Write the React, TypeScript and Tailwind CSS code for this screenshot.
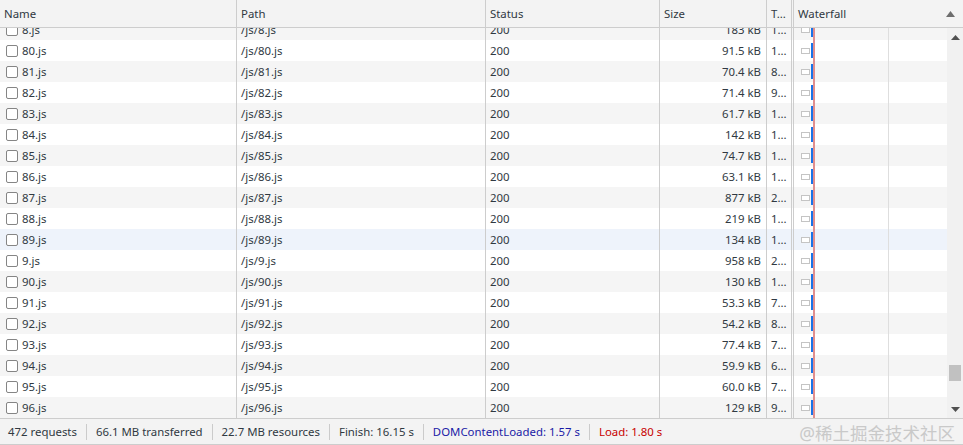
import React from "react";

const rows: [string, string, string][] = [
  ["8", "183 kB", "1..."],
  ["80", "91.5 kB", "1..."],
  ["81", "70.4 kB", "8..."],
  ["82", "71.4 kB", "9..."],
  ["83", "61.7 kB", "1..."],
  ["84", "142 kB", "1..."],
  ["85", "74.7 kB", "1..."],
  ["86", "63.1 kB", "1..."],
  ["87", "877 kB", "2..."],
  ["88", "219 kB", "1..."],
  ["89", "134 kB", "1..."],
  ["9", "958 kB", "2..."],
  ["90", "130 kB", "1..."],
  ["91", "53.3 kB", "7..."],
  ["92", "54.2 kB", "8..."],
  ["93", "77.4 kB", "7..."],
  ["94", "59.9 kB", "6..."],
  ["95", "60.0 kB", "7..."],
  ["96", "129 kB", "9..."],
];

const cols = "grid grid-cols-[237px_249px_174px_107px_25px_155px]";

function Sep() {
  return <div className="mx-[9px] h-[16px] w-px bg-[#cbcbcb]" />;
}

export default function App() {
  return (
    <div
      className="relative w-[963px] h-[445px] overflow-hidden bg-white text-[11.4px] text-[#303942]"
      style={{ fontFamily: '"Noto Sans", "Open Sans", sans-serif' }}
    >
      {/* header */}
      <div className="flex h-[28px] bg-[#f3f3f3] border-b border-[#cdcdcd]">
        <div className={cols + " h-full"}>
          <div className="flex items-center px-[4px] border-r border-[#cdcdcd]">Name</div>
          <div className="flex items-center px-[4px] border-r border-[#cdcdcd]">Path</div>
          <div className="flex items-center px-[4px] border-r border-[#cdcdcd]">Status</div>
          <div className="flex items-center px-[4px] border-r border-[#cdcdcd]">Size</div>
          <div className="flex items-center px-[4px] border-r border-[#cdcdcd] overflow-hidden whitespace-nowrap">T...</div>
          <div className="flex items-center px-[4px] border-l border-[#cdcdcd] ml-[1px]">Waterfall</div>
        </div>
        <div className="flex-1 flex items-center justify-center">
          <svg width="9" height="6" viewBox="0 0 9 6" className="-ml-[10px]">
            <path d="M0 6 L4.5 0 L9 6 Z" fill="#6e6e6e" />
          </svg>
        </div>
      </div>

      {/* body */}
      <div className="flex h-[390px]">
        <div className="relative w-[947px] overflow-hidden">
          <div className="-mt-[9px]">
            {rows.map(([n, size, time], i) => {
              const bg = n === "89" ? "bg-[#eef3fb]" : i % 2 === 0 ? "bg-[#f5f5f5]" : "bg-white";
              return (
                <div key={n} className={cols + " h-[21px] " + bg}>
                  <div className="flex items-center gap-[4px] pl-[6px] border-r border-[#cdcdcd]">
                    <span className="w-[12px] h-[12px] border border-[#858585] rounded-[2px] bg-white" />
                    <span>{n}.js</span>
                  </div>
                  <div className="flex items-center px-[4px] border-r border-[#cdcdcd]">/js/{n}.js</div>
                  <div className="flex items-center px-[4px] border-r border-[#cdcdcd]">200</div>
                  <div className="flex items-center justify-end pr-[5px] border-r border-[#cdcdcd]">{size}</div>
                  <div className="flex items-center pl-[4px] border-r border-[#cdcdcd] overflow-hidden whitespace-nowrap">{time}</div>
                  <div className="relative flex items-center ml-[1px] border-l border-[#cdcdcd]">
                    <span className="ml-[7px] w-[9px] h-[6px] border border-[#c4c4c4] bg-white" />
                    <span className="ml-[1px] w-[3px] h-[15px] bg-[#1a73e8]" />
                  </div>
                </div>
              );
            })}
          </div>
          {/* waterfall overlays */}
          <div className="absolute top-0 bottom-0 left-[813px] w-[2px] bg-[#e08e8e]" />
          <div className="absolute top-0 bottom-0 left-[888px] w-px bg-[#dedede]" />
        </div>
        {/* scrollbar */}
        <div className="relative flex-1 bg-[#f1f1f1] flex flex-col items-center">
          <svg width="9" height="5" viewBox="0 0 9 5" className="mt-[7px]">
            <path d="M0 5 L4.5 0 L9 5 Z" fill="#505050" />
          </svg>
          <div className="flex-1" />
          <div className="w-[12px] h-[16px] bg-[#c1c1c1] mb-[26px]" />
          <svg width="9" height="5" viewBox="0 0 9 5" className="mb-[6px]">
            <path d="M0 0 L4.5 5 L9 0 Z" fill="#505050" />
          </svg>
        </div>
      </div>

      {/* status bar */}
      <div className="relative flex items-center h-[27px] bg-[#f3f3f3] border-t border-[#cdcdcd] border-b px-[8px] whitespace-nowrap">
        <span>472 requests</span>
        <Sep />
        <span>66.1 MB transferred</span>
        <Sep />
        <span>22.7 MB resources</span>
        <Sep />
        <span>Finish: 16.15 s</span>
        <Sep />
        <span className="text-[#1a1aa6]">DOMContentLoaded: 1.57 s</span>
        <Sep />
        <span className="text-[#c80000]">Load: 1.80 s</span>
        <span
          className="absolute right-[8px] top-[1px] text-[17.5px] text-[#c9c9c9]"
          style={{ fontFamily: '"Noto Sans", "Noto Sans CJK SC", sans-serif' }}
        >
          @稀土掘金技术社区
        </span>
      </div>
    </div>
  );
}
